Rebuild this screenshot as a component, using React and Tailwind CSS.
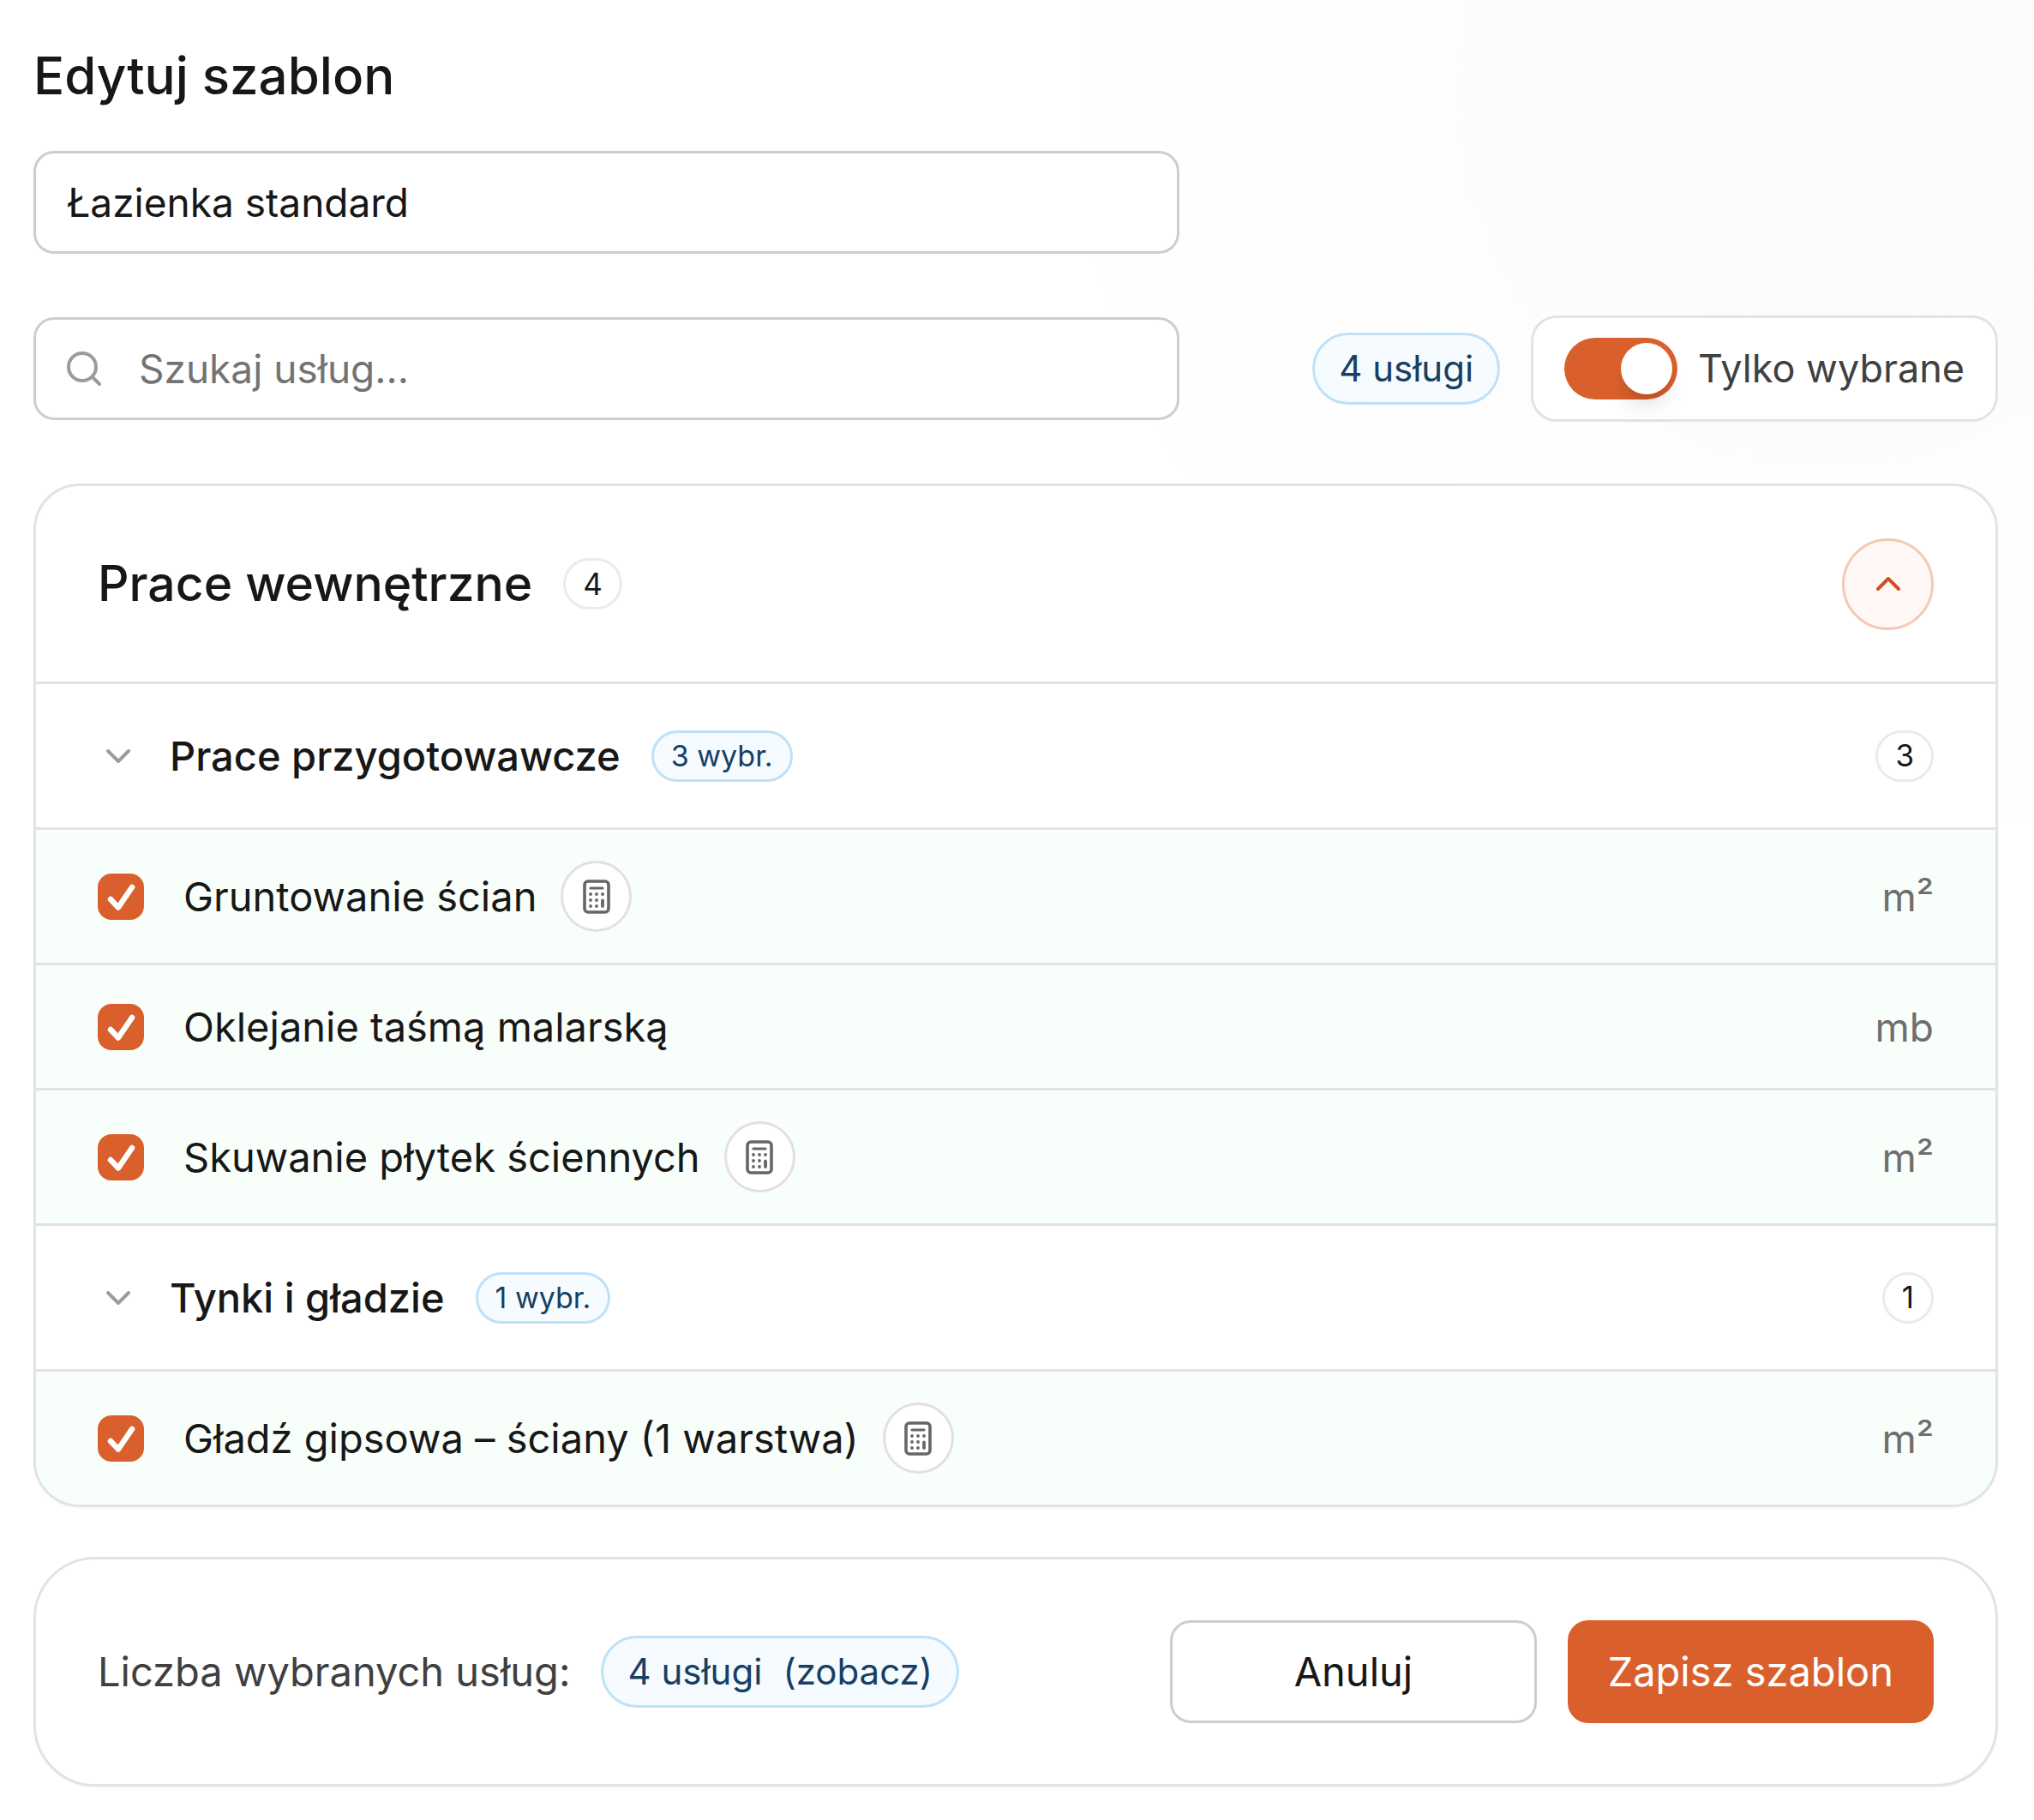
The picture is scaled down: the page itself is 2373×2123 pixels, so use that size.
import { ChevronUp, ChevronDown } from 'lucide-react';

const groups = [
    {
        name: 'Prace przygotowawcze',
        selected: 3,
        items: [
            { id: 'gruntowanie', name: 'Gruntowanie ścian', unit: 'm²', calc: true },
            { id: 'oklejanie', name: 'Oklejanie taśmą malarską', unit: 'mb', calc: false },
            { id: 'skuwanie', name: 'Skuwanie płytek ściennych', unit: 'm²', calc: true },
        ],
    },
    {
        name: 'Tynki i gładzie',
        selected: 1,
        items: [
            { id: 'gladz', name: 'Gładź gipsowa – ściany (1 warstwa)', unit: 'm²', calc: true },
        ],
    },
];

const SearchIcon = () => (
    <svg viewBox="0 0 40 40" className="size-10 shrink-0" fill="none" stroke="#9b9b9b" strokeWidth="4" strokeLinecap="round">
        <circle cx="18" cy="18" r="16" />
        <path d="M29.5 29.5l8.500 8.500" />
    </svg>
);

const CheckIcon = () => (
    <svg viewBox="0 0 54 54" className="pointer-events-none absolute hidden size-full peer-checked:block" fill="none" stroke="#fff" strokeWidth="6.5" strokeLinecap="round" strokeLinejoin="round">
        <path d="M15 30l9 9.500l16-23.500" />
    </svg>
);

const CalculatorIcon = () => (
    <svg viewBox="0 0 32 40" className="h-10 w-8" fill="none" stroke="#666" strokeLinecap="round">
        <rect x="2" y="2" width="28" height="36" rx="4" strokeWidth="3.6" />
        <path d="M9 10h14" strokeWidth="3.2" />
        <path d="M9 17h.01M16 17h.01M23 17h.01M9 24h.01M16 24h.01M9 31h.01M16 31h.01M23 24.500v6.500" strokeWidth="3.8" />
    </svg>
);

const Count = ({ children }) => (
    <span className="flex h-15 shrink-0 items-center justify-center rounded-full border-3 border-[#ebebeb] bg-white px-5 text-[35px] leading-none">
        {children}
    </span>
);

const ServiceRow = ({ item }) => (
    <li className="flex min-h-[146px] items-center border-t-3 border-[#e3e3e3] bg-[#f8fefa] px-18 py-9">
        <label className="flex items-center gap-[46px]">
            <span className="relative flex size-[54px]">
                <input type="checkbox" defaultChecked className="peer size-full appearance-none rounded-2xl border-3 border-[#cdcdcd] bg-white checked:border-[#d9602c] checked:bg-[#d9602c]" />
                <CheckIcon />
            </span>
            <span className="text-[47px] leading-[60px]">{item.name}</span>
        </label>
        {item.calc && (
            <button type="button" aria-label="Kalkulator" className="ml-7 flex size-[83px] items-center justify-center rounded-full border-3 border-[#e3e0e0] bg-white">
                <CalculatorIcon />
            </button>
        )}
        <span className="ml-auto text-[46px] leading-[60px] text-[#6e6e6e]">{item.unit}</span>
    </li>
);

const ServiceGroup = ({ group }) => (
    <section>
        <div className="flex min-h-[170px] items-center border-t-3 border-[#e3e3e3] px-18">
            <button type="button" className="flex items-center gap-9 text-[47px] leading-[60px] font-medium">
                <ChevronDown className="size-12 text-[#9b9b9b]" strokeWidth={2} />
                {group.name}
            </button>
            <span className="mr-auto ml-9 flex h-15 items-center rounded-full border-3 border-[#bfe1f8] bg-[#f6fbff] px-5 text-[34px] leading-none text-[#173f63]">
                {group.selected} wybr.
            </span>
            <Count>{group.selected}</Count>
        </div>
        <ul>
            {group.items.map((item) => (
                <ServiceRow key={item.id} item={item} />
            ))}
        </ul>
    </section>
);

export default function App() {
    return (
        <div className="min-h-screen bg-white bg-[radial-gradient(circle_at_90%_5%,#fbfafd,#ffffff_30%)] py-10 pr-[42px] pl-[39px] font-['Inter',sans-serif] text-[#171717]">
            <h1 className="text-[60px] leading-[96px] font-medium">Edytuj szablon</h1>

            {/* Template name */}
            <input
                type="text"
                aria-label="Nazwa szablonu"
                defaultValue="Łazienka standard"
                className="mt-10 block h-30 w-[1337px] max-w-full rounded-3xl border-3 border-[#cdcdcd] bg-white px-9 text-[46px]"
            />

            {/* Search and filter */}
            <div className="mt-18 flex items-center gap-9">
                <label className="mr-auto flex h-30 w-[1337px] items-center gap-11 rounded-3xl border-3 border-[#cdcdcd] bg-white px-9">
                    <SearchIcon />
                    <input type="search" aria-label="Szukaj usług" placeholder="Szukaj usług..." className="w-full text-[46px] outline-none placeholder:text-[#737373]" />
                </label>
                <span className="flex h-21 shrink-0 items-center rounded-full border-3 border-[#bfe1f8] bg-[#f6fbff] px-7 text-[42px] leading-none text-[#173f63]">
                    4 usługi
                </span>
                <label className="flex h-31 shrink-0 items-center gap-6 rounded-[30px] border-3 border-[#e3e3e3] bg-white px-9 text-[45px] text-[#404040]">
                    <span className="relative flex items-center">
                        <input type="checkbox" role="switch" defaultChecked className="peer h-18 w-33 appearance-none rounded-full bg-[#cdcdcd] checked:bg-[#d9602c]" />
                        <span className="pointer-events-none absolute left-1.5 size-15 rounded-full bg-white shadow-xl peer-checked:left-auto peer-checked:right-1.5" />
                    </span>
                    Tylko wybrane
                </label>
            </div>

            {/* Services */}
            <main className="mt-18 overflow-hidden rounded-[54px] border-3 border-[#e3e3e3] bg-white shadow-xs">
                <div className="flex min-h-[228px] items-center px-18">
                    <h2 className="mr-9 text-[57px] leading-[72px] font-medium">Prace wewnętrzne</h2>
                    <Count>4</Count>
                    <button type="button" aria-label="Zwiń" className="ml-auto flex size-[107px] items-center justify-center rounded-full border-3 border-[#f4c8b4] bg-[#fff8f4]">
                        <ChevronUp className="size-12 text-[#cc4f26]" strokeWidth={2} />
                    </button>
                </div>
                {groups.map((group) => (
                    <ServiceGroup key={group.name} group={group} />
                ))}
            </main>

            {/* Summary */}
            <footer className="mt-[58px] flex min-h-[268px] items-center rounded-[72px] border-3 border-[#e3e3e3] bg-white px-18 shadow-xs">
                <span className="text-[47px] text-[#404040]">Liczba wybranych usług:</span>
                <button type="button" className="ml-9 flex h-21 items-center gap-6 rounded-full border-3 border-[#bfe1f8] bg-[#f6fbff] px-7 text-[42px] leading-none text-[#173f63]">
                    <span>4 usługi</span>
                    <span>(zobacz)</span>
                </button>
                <div className="ml-auto grid grid-cols-2 gap-9">
                    <button type="button" className="h-30 rounded-3xl border-3 border-[#cdcdcd] bg-white px-11 text-[47px]">Anuluj</button>
                    <button type="button" className="h-30 rounded-3xl border-3 border-[#d9602c] bg-[#d9602c] px-11 text-[47px] text-white">Zapisz szablon</button>
                </div>
            </footer>
        </div>
    );
}
